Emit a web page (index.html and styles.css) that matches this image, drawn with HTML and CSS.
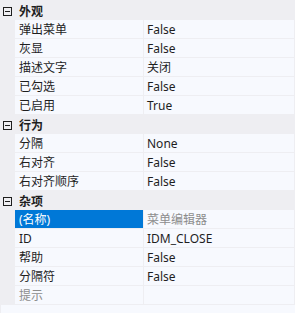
FILE: index.html
```html
<!DOCTYPE html>
<html lang="zh-CN">
<head>
    <meta charset="UTF-8">
    <title>属性</title>
    <link rel="stylesheet" href="styles.css">
</head>
<body>
    <div class="grid">
        <div class="category">
            <svg class="toggle" width="9" height="9" viewBox="0 0 9 9"><rect x="0.5" y="0.5" width="8" height="8" fill="none" stroke="#1e1e1e"/><path d="M2 4.5h5" stroke="#1e1e1e"/></svg>
            <span>外观</span>
        </div>
        <div class="row"><div class="name">弹出菜单</div><div class="value">False</div></div>
        <div class="row"><div class="name">灰显</div><div class="value">False</div></div>
        <div class="row"><div class="name">描述文字</div><div class="value">关闭</div></div>
        <div class="row"><div class="name">已勾选</div><div class="value">False</div></div>
        <div class="row"><div class="name">已启用</div><div class="value">True</div></div>

        <div class="category">
            <svg class="toggle" width="9" height="9" viewBox="0 0 9 9"><rect x="0.5" y="0.5" width="8" height="8" fill="none" stroke="#1e1e1e"/><path d="M2 4.5h5" stroke="#1e1e1e"/></svg>
            <span>行为</span>
        </div>
        <div class="row"><div class="name">分隔</div><div class="value">None</div></div>
        <div class="row"><div class="name">右对齐</div><div class="value">False</div></div>
        <div class="row"><div class="name">右对齐顺序</div><div class="value">False</div></div>

        <div class="category">
            <svg class="toggle" width="9" height="9" viewBox="0 0 9 9"><rect x="0.5" y="0.5" width="8" height="8" fill="none" stroke="#1e1e1e"/><path d="M2 4.5h5" stroke="#1e1e1e"/></svg>
            <span>杂项</span>
        </div>
        <div class="row selected"><div class="name">(名称)</div><div class="value muted">菜单编辑器</div></div>
        <div class="row"><div class="name">ID</div><div class="value">IDM_CLOSE</div></div>
        <div class="row"><div class="name">帮助</div><div class="value">False</div></div>
        <div class="row"><div class="name">分隔符</div><div class="value">False</div></div>
        <div class="row"><div class="name muted">提示</div><div class="value"></div></div>
    </div>
    <div class="footer"></div>
</body>
</html>
```

FILE: styles.css
```css
body {
    margin: 0;
    background: #eeeef2;
    font-family: "Noto Sans", "Noto Sans CJK SC", sans-serif;
    font-size: 12px;
    color: #1e1e1e;
}

.grid {
    padding-top: 1px;
    padding-right: 1px;
}

.category {
    height: 19px;
    display: flex;
    align-items: center;
    font-weight: bold;
}

.toggle {
    margin: 1px 7px 0 3px;
    flex: none;
}

.row {
    display: grid;
    grid-template-columns: 128px 1fr;
    column-gap: 1px;
    margin-left: 15px;
    height: 18px;
    border-bottom: 1px solid #eeeef2;
    background: #eeeef2;
}

.name, .value {
    background: #f7f9fe;
    padding: 1px 0 0 4px;
    line-height: 17px;
    white-space: nowrap;
    overflow: hidden;
}

.value {
    padding-left: 3px;
}

.selected .name {
    background: #0078d7;
    color: #ffffff;
}

.muted {
    color: #8d8d8d;
}

.footer {
    height: 8px;
    margin-left: 1px;
    background: #f7f9fe;
}
```
